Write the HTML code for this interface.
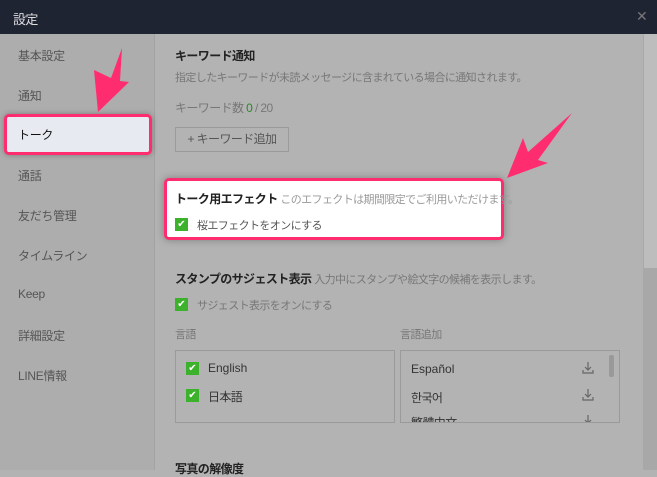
<html><head><style>
body{margin:0;width:657px;height:470px;overflow:hidden;background:#b3b3b3;font-family:"Liberation Sans","Noto Sans CJK JP",sans-serif;font-size:11px;letter-spacing:-0.6px;color:#333;position:relative}
.a{position:absolute;white-space:nowrap}
.top{left:0;top:0;width:657px;height:34px;background:#1f2433;color:#ddd;font-size:13px}
.side{left:0;top:34px;width:154px;height:436px;background:#adadad;border-right:1px solid #a2a2a2}
.si{left:18px;color:#555;font-size:12px;letter-spacing:-0.3px}
.g{color:#777}
.cb{width:13px;height:13px;background:#3cb22c;color:#fff;font-size:10px;line-height:13px;text-align:center;letter-spacing:0}
.box{border:1px solid #9a9a9a}
</style></head><body>
<div class="a top"><span class="a" style="left:13px;top:9px">設定</span><span class="a" style="left:636px;top:8px;color:#777;font-size:14px">✕</span></div>
<div class="a side"></div>
<div class="a si" style="top:47px">基本設定</div>
<div class="a si" style="top:87px">通知</div>
<div class="a" style="left:4px;top:114px;width:142px;height:35px;background:#e8eaf2;border:3px solid #ff2d6f;border-radius:5px;box-shadow:0 0 6px rgba(0,0,0,.3)"></div>
<div class="a si" style="top:126px;color:#111">トーク</div>
<div class="a si" style="top:167px">通話</div>
<div class="a si" style="top:207px">友だち管理</div>
<div class="a si" style="top:247px">タイムライン</div>
<div class="a si" style="top:287px">Keep</div>
<div class="a si" style="top:327px">詳細設定</div>
<div class="a si" style="top:367px">LINE情報</div>
<div class="a" style="left:643px;top:34px;width:14px;height:436px;background:#a8a8a8"></div>
<div class="a" style="left:644px;top:34px;width:13px;height:234px;background:#bdbdbd"></div>
<div class="a" style="left:175px;top:47px;font-weight:bold;color:#222;font-size:12px">キーワード通知</div>
<div class="a g" style="left:175px;top:69px">指定したキーワードが未読メッセージに含まれている場合に通知されます。</div>
<div class="a g" style="left:175px;top:99px;font-size:12px">キーワード数 <span style="color:#2a8a20">0</span> / 20</div>
<div class="a box" style="left:175px;top:127px;width:112px;height:23px;color:#555;text-align:center;line-height:23px;font-size:12px">+ キーワード追加</div>
<div class="a" style="left:164px;top:178px;width:334px;height:56px;background:#fff;border:3px solid #ff2d6f;border-radius:5px;box-shadow:0 0 8px rgba(0,0,0,.3)"></div>
<div class="a" style="left:175px;top:190px;font-weight:bold;color:#222;font-size:12px">トーク用エフェクト <span style="font-weight:normal;color:#999;font-size:11px">このエフェクトは期間限定でご利用いただけます。</span></div>
<div class="a cb" style="left:175px;top:218px">✔</div><div class="a" style="left:197px;top:217px;color:#555">桜エフェクトをオンにする</div>
<div class="a" style="left:175px;top:270px;font-weight:bold;color:#222;font-size:12px">スタンプのサジェスト表示 <span style="font-weight:normal;font-size:11px" class="g">入力中にスタンプや絵文字の候補を表示します。</span></div>
<div class="a cb" style="left:175px;top:298px">✔</div><div class="a g" style="left:197px;top:297px">サジェスト表示をオンにする</div>
<div class="a g" style="left:175px;top:326px">言語</div>
<div class="a g" style="left:400px;top:326px">言語追加</div>
<div class="a box" style="left:175px;top:350px;width:218px;height:71px"></div>
<div class="a cb" style="left:186px;top:362px">✔</div><div class="a" style="left:208px;top:361px;font-size:12px;letter-spacing:0">English</div>
<div class="a cb" style="left:186px;top:389px">✔</div><div class="a" style="left:208px;top:388px;font-size:12px">日本語</div>
<div class="a box" style="left:400px;top:350px;width:218px;height:71px;overflow:hidden">
<div class="a" style="left:10px;top:11px;font-size:12px;letter-spacing:0">Español</div><div class="a" style="left:10px;top:38px;font-size:12px">한국어</div><div class="a" style="left:10px;top:63px;font-size:12px">繁體中文</div>
<svg class="a" style="left:181px;top:11px" width="12" height="70"><g fill="none" stroke="#666" stroke-width="1.2"><path d="M6 0v8M3 5l3 3 3-3M1 8v3h10V8"/><path d="M6 27v8M3 32l3 3 3-3M1 35v3h10v-3"/><path d="M6 53v8M3 58l3 3 3-3"/></g></svg>
<div class="a" style="left:208px;top:4px;width:5px;height:22px;background:#999;border-radius:2px"></div></div>
<div class="a" style="left:175px;top:460px;font-weight:bold;color:#222;font-size:12px">写真の解像度</div>
<svg class="a" style="left:0;top:0" width="657" height="470">
<polygon points="98,112 94,70 111,78 122,48 120,81 129,82" fill="#ff2d6f"/>
<polygon points="507,178 523,138 528,152 572,113 538,160 548,163" fill="#ff2d6f"/>
</svg>
</body></html>
